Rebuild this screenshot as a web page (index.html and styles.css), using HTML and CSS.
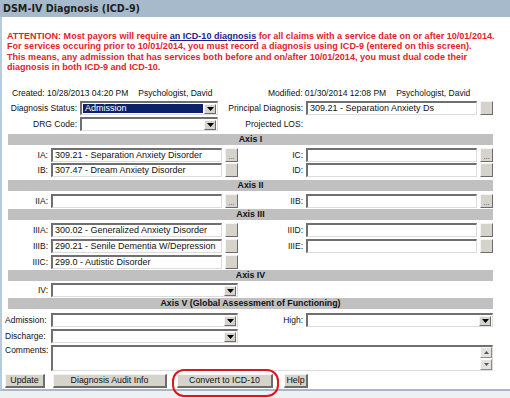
FILE: index.html
```html
<!DOCTYPE html>
<html>
<head>
<meta charset="utf-8">
<link rel="stylesheet" href="styles.css">
</head>
<body>
<div class="titlebar">DSM-IV Diagnosis (ICD-9)</div>
<div class="panel">
  <p class="notice">ATTENTION: Most payors will require <a href="#">an ICD-10 diagnosis</a> for all claims with a service date on or after 10/01/2014.<br>For services occuring prior to 10/01/2014, you must record a diagnosis using ICD-9 (entered on this screen).<br>This means, any admission that has services both before and on/after 10/01/2014, you must dual code their<br>diagnosis in both ICD-9 and ICD-10.</p>

  <div class="meta">
    <div class="meta-item"><span>Created: 10/28/2013 04:20 PM</span><span class="who">Psychologist, David</span></div>
    <div class="meta-item"><span>Modified: 01/30/2014 12:08 PM</span><span class="who">Psychologist, David</span></div>
  </div>

  <div class="topgrid">
    <label class="lbl">Diagnosis Status:</label>
    <div class="select"><span class="val selected">Admission</span><span class="drop"><svg width="7" height="5" viewBox="0 0 7 5"><path d="M0 0h7L3.5 4z" fill="#000"/></svg></span></div>
    <label class="lbl">Principal Diagnosis:</label>
    <div class="field">309.21 - Separation Anxiety Ds</div>
    <button class="pick"></button>

    <label class="lbl">DRG Code:</label>
    <div class="select"><span class="val"></span><span class="drop"><svg width="7" height="5" viewBox="0 0 7 5"><path d="M0 0h7L3.5 4z" fill="#000"/></svg></span></div>
    <label class="lbl">Projected LOS:</label>
    <div></div>
    <div></div>
  </div>

  <section class="axis axis-1">
    <div class="axis-head">Axis I</div>
    <div class="agrid">
      <label class="lbl">IA:</label><div class="field">309.21 - Separation Anxiety Disorder</div><button class="pick dots">...</button>
      <label class="lbl">IC:</label><div class="field"></div><button class="pick dots">...</button>
      <label class="lbl">IB:</label><div class="field">307.47 - Dream Anxiety Disorder</div><button class="pick"></button>
      <label class="lbl">ID:</label><div class="field"></div><button class="pick"></button>
    </div>
  </section>

  <section class="axis axis-2">
    <div class="axis-head">Axis II</div>
    <div class="agrid">
      <label class="lbl">IIA:</label><div class="field"></div><button class="pick dots">...</button>
      <label class="lbl">IIB:</label><div class="field"></div><button class="pick dots">...</button>
    </div>
  </section>

  <section class="axis axis-3">
    <div class="axis-head">Axis III</div>
    <div class="agrid">
      <label class="lbl">IIIA:</label><div class="field">300.02 - Generalized Anxiety Disorder</div><button class="pick"></button>
      <label class="lbl">IIID:</label><div class="field"></div><button class="pick"></button>
      <label class="lbl">IIIB:</label><div class="field">290.21 - Senile Dementia W/Depression</div><button class="pick"></button>
      <label class="lbl">IIIE:</label><div class="field"></div><button class="pick"></button>
      <label class="lbl">IIIC:</label><div class="field">299.0 - Autistic Disorder</div><button class="pick"></button>
      <div class="rest"></div>
    </div>
  </section>

  <section class="axis axis-4">
    <div class="axis-head">Axis IV</div>
    <div class="agrid">
      <label class="lbl">IV:</label>
      <div class="select span-l"><span class="val"></span><span class="drop"><svg width="7" height="5" viewBox="0 0 7 5"><path d="M0 0h7L3.5 4z" fill="#000"/></svg></span></div>
    </div>
  </section>

  <section class="axis axis-5">
    <div class="axis-head">Axis V (Global Assessment of Functioning)</div>
    <div class="agrid">
      <label class="lbl lft">Admission:</label>
      <div class="select span-l"><span class="val"></span><span class="drop"><svg width="7" height="5" viewBox="0 0 7 5"><path d="M0 0h7L3.5 4z" fill="#000"/></svg></span></div>
      <label class="lbl">High:</label>
      <div class="select span-r"><span class="val"></span><span class="drop"><svg width="7" height="5" viewBox="0 0 7 5"><path d="M0 0h7L3.5 4z" fill="#000"/></svg></span></div>
      <label class="lbl lft">Discharge:</label>
      <div class="select span-l"><span class="val"></span><span class="drop"><svg width="7" height="5" viewBox="0 0 7 5"><path d="M0 0h7L3.5 4z" fill="#000"/></svg></span></div>
      <div class="rest"></div>
      <label class="lbl lft top">Comments:</label>
      <div class="textarea">
        <span class="scroll">
          <span class="sbtn"><svg width="5" height="3" viewBox="0 0 5 3"><path d="M0 3h5L2.5 0z" fill="#555"/></svg></span>
          <span class="sbtn"><svg width="5" height="3" viewBox="0 0 5 3"><path d="M0 0h5L2.5 3z" fill="#555"/></svg></span>
        </span>
      </div>
    </div>
  </section>

  <div class="actions">
    <button class="btn b-update">Update</button>
    <button class="btn b-audit">Diagnosis Audit Info</button>
    <button class="btn b-convert">Convert to ICD-10<span class="circle"></span></button>
    <button class="btn b-help">Help</button>
  </div>
</div>
</body>
</html>
```

FILE: styles.css
```css
* { box-sizing: border-box; }
html, body { margin: 0; padding: 0; }
body {
  width: 510px;
  height: 398px;
  background: #eef1f4;
  font-family: "Liberation Sans", Arial, sans-serif;
  font-size: 8.5px;
  color: #111;
  overflow: hidden;
}
.titlebar {
  height: 17px;
  background: #a6bacb;
  font-family: "DejaVu Sans", Verdana, sans-serif;
  font-weight: bold;
  font-size: 9.6px;
  line-height: 18px;
  padding-left: 3px;
  color: #1e1e1e;
}
.panel {
  background: #fff;
  border-left: 2px solid #b7cbdc;
  border-bottom: 2px solid #a8b7c6;
  padding: 0 0 4px 3px;
  height: 374px;
}
.notice {
  margin: 0;
  padding: 14px 0 0 2px;
  color: #e3232b;
  font-weight: bold;
  font-size: 9.05px;
  line-height: 10.3px;
  white-space: nowrap;
}
.notice a { color: #1d1d8e; text-decoration: underline; }

.meta {
  display: grid;
  grid-template-columns: 256px 1fr;
  padding: 16px 0 0 7px;
  line-height: 10px;
}
.meta-item { display: flex; }
.meta-item .who { margin-left: 10px; }

.lbl {
  text-align: right;
  white-space: nowrap;
  line-height: 14px;
}
.lbl.lft { text-align: left; }
.lbl.top { align-self: start; line-height: 10px; }

.topgrid {
  display: grid;
  grid-template-columns: 72px 138px 82px 171px 13px;
  grid-auto-rows: 14px;
  column-gap: 3px;
  row-gap: 2px;
  margin-top: 3px;
}
.field {
  height: 14px;
  background: #fff;
  border-top: 2px solid #6f6f6f;
  border-left: 2px solid #6f6f6f;
  border-right: 1px solid #dcdcdc;
  border-bottom: 1px solid #dcdcdc;
  font-size: 9px;
  line-height: 11px;
  padding-left: 2px;
  white-space: nowrap;
  overflow: hidden;
}
.pick {
  height: 14px;
  width: 13px;
  padding: 0;
  margin: 0;
  background: #d6d3cc;
  border-top: 1px solid #f4f4f4;
  border-left: 1px solid #f4f4f4;
  border-right: 1px solid #6c6c6c;
  border-bottom: 1px solid #6c6c6c;
  font-size: 7px;
  line-height: 16px;
  color: #333;
  font-family: "Liberation Sans", Arial, sans-serif;
  overflow: hidden;
}
.select {
  height: 14px;
  display: flex;
  background: #fff;
  border-top: 2px solid #6f6f6f;
  border-left: 2px solid #6f6f6f;
  border-right: 1px solid #dcdcdc;
  border-bottom: 1px solid #dcdcdc;
  padding: 1px;
}
.select .val {
  flex: 1;
  font-size: 9px;
  line-height: 9px;
  padding-left: 2px;
  white-space: nowrap;
}
.select .val.selected { background: #0c2268; color: #fff; }
.select .drop {
  width: 12px;
  height: 10px;
  margin-left: 1px;
  background: #d6d3cc;
  border-top: 1px solid #f4f4f4;
  border-left: 1px solid #f4f4f4;
  border-right: 1px solid #6c6c6c;
  border-bottom: 1px solid #6c6c6c;
  display: flex;
  align-items: center;
  justify-content: center;
}

.axis-head {
  margin-left: 3px;
  width: 485px;
  height: 11px;
  background: #c0c0c0;
  text-align: center;
  font-weight: bold;
  font-size: 8.8px;
  line-height: 11px;
}
.agrid {
  display: grid;
  grid-template-columns: 43px 171px 13px 62px 171px 13px;
  grid-auto-rows: 14px;
  column-gap: 3px;
  row-gap: 1px;
  margin-top: 3px;
}
.rest { grid-column: span 3; }
.axis-1 { margin-top: 3px; }
.axis-2 { margin-top: 3px; }
.axis-3 { margin-top: 1px; }
.axis-3 .agrid { row-gap: 2px; }
.axis-4 { margin-top: 1px; }
.axis-4 .agrid { margin-top: 2px; }
.axis-5 { margin-top: 1px; }
.axis-5 .agrid { margin-top: 4px; row-gap: 2px; grid-template-rows: 14px 14px 26px; }
.span-l { grid-column: span 2; }
.span-r { grid-column: span 2; }
.textarea {
  grid-column: span 5;
  height: 26px;
  background: #fff;
  border-top: 2px solid #6f6f6f;
  border-left: 2px solid #6f6f6f;
  border-right: 1px solid #dcdcdc;
  border-bottom: 1px solid #dcdcdc;
  display: flex;
  justify-content: flex-end;
}
.scroll {
  width: 12px;
  display: flex;
  flex-direction: column;
  gap: 1px;
}
.sbtn {
  flex: 1;
  background: #e4e2de;
  border-top: 1px solid #fafafa;
  border-left: 1px solid #fafafa;
  border-right: 1px solid #8a8a8a;
  border-bottom: 1px solid #8a8a8a;
  display: flex;
  align-items: center;
  justify-content: center;
}

.actions {
  display: flex;
  margin-top: 3px;
  align-items: flex-start;
}
.btn {
  height: 14px;
  padding: 0;
  margin: 0;
  background: #d6d3cc;
  border-top: 1px solid #f4f4f4;
  border-left: 1px solid #f4f4f4;
  border-right: 2px solid #6c6c6c;
  border-bottom: 2px solid #6c6c6c;
  font-family: "Liberation Sans", Arial, sans-serif;
  font-size: 8.8px;
  color: #111;
  line-height: 11px;
  text-align: center;
}
.b-update { width: 40px; }
.b-audit { width: 114px; margin-left: 8px; }
.b-convert { width: 96px; margin-left: 10px; position: relative; }
.b-help { width: 24px; margin-left: 11px; }
.circle {
  position: absolute;
  left: -6px;
  top: -6px;
  width: 107px;
  height: 28px;
  border: 2.5px solid #e0151b;
  border-radius: 12px;
}
```
